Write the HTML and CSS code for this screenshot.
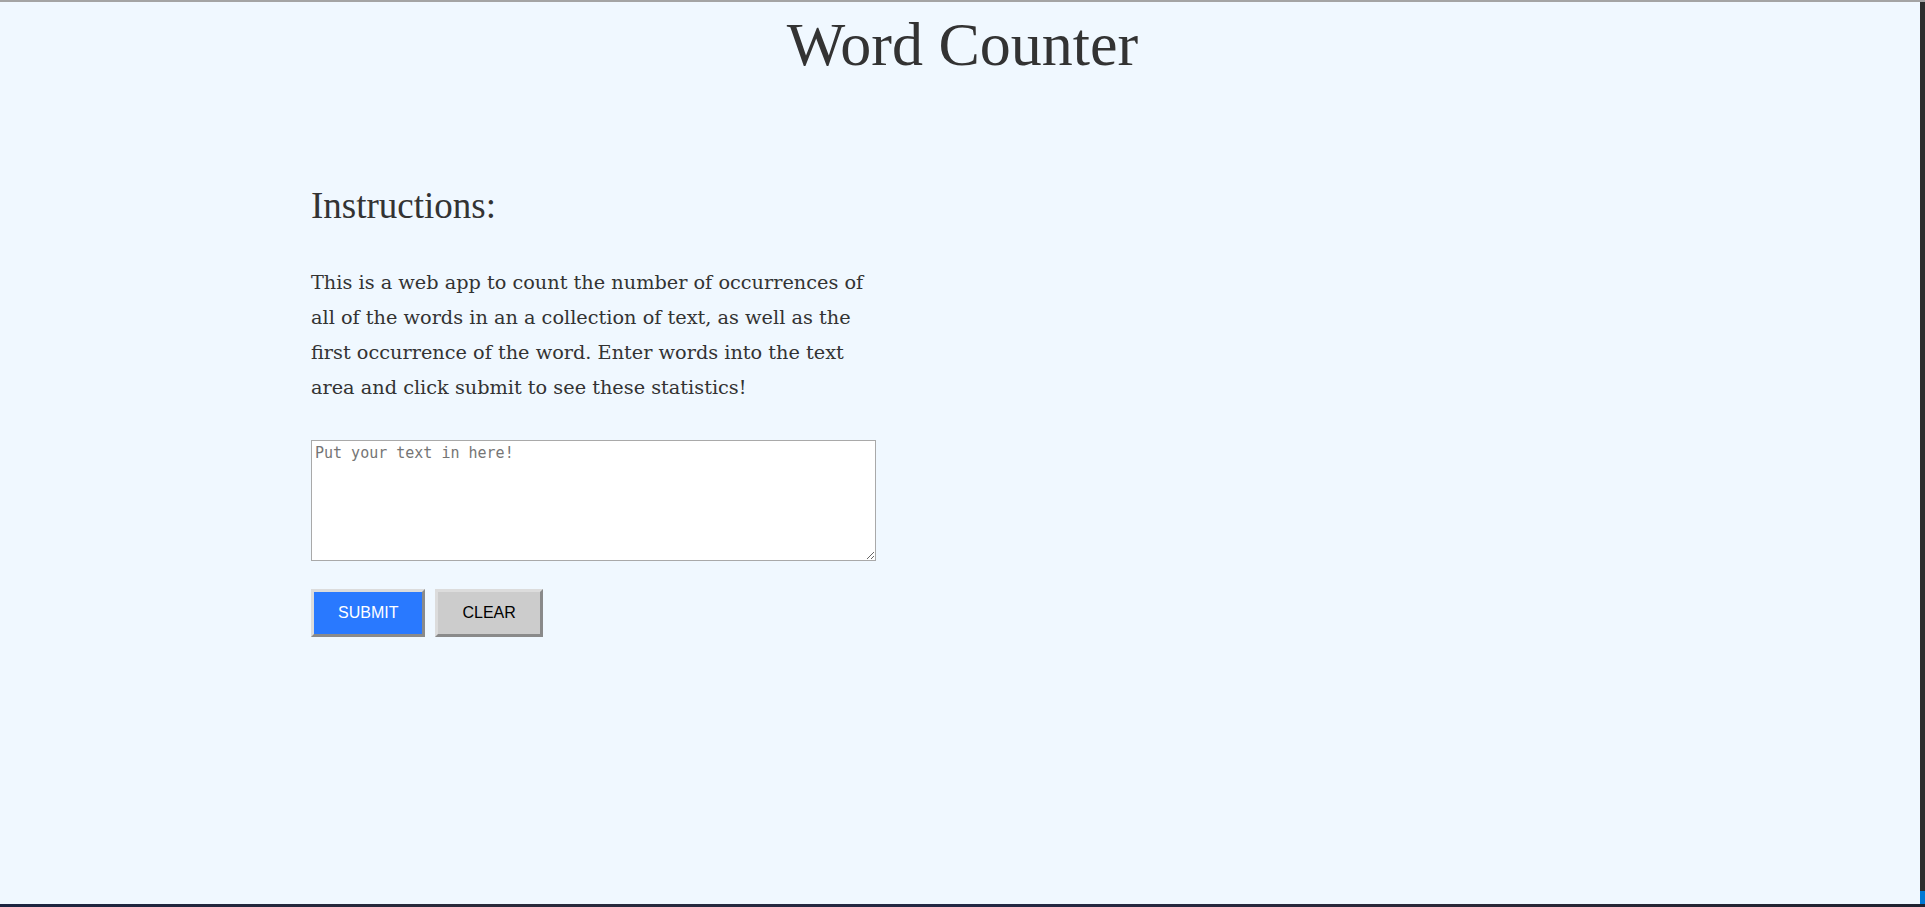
FILE: index.html
```html
<!DOCTYPE html>
<html lang="en">
<head>
<meta charset="utf-8">
<title>Word Counter</title>
<link rel="stylesheet" href="styles.css">
</head>
<body>
<div class="edge-right"><span class="edge-blue"></span></div>
<div class="edge-bottom"></div>
<header class="header">
  <h1 class="title">Word Counter</h1>
</header>
<main class="container">
  <h2 class="section-title">Instructions:</h2>
  <p class="intro">This is a web app to count the number of occurrences of all of the words in an a collection of text, as well as the first occurrence of the word. Enter words into the text area and click submit to see these statistics!</p>
  <textarea class="input" placeholder="Put your text in here!"></textarea>
  <div class="actions">
    <button class="btn btn-submit" type="button">SUBMIT</button>
    <button class="btn btn-clear" type="button">CLEAR</button>
  </div>
</main>
</body>
</html>
```

FILE: styles.css
```css
html, body {
  margin: 0;
  padding: 0;
}
body {
  background: #f0f8ff;
  color: #333;
  font-family: "Liberation Serif", "Times New Roman", serif;
  border-top: 2px solid #a4a4a4;
  min-height: 905px;
  box-sizing: border-box;
}
.edge-right {
  position: fixed;
  top: 2px;
  right: 0;
  bottom: 3px;
  width: 5px;
  background: #2e2e2e;
  display: flex;
  flex-direction: column;
  justify-content: flex-end;
}
.edge-blue {
  display: block;
  height: 13px;
  background: #0078d4;
}
.edge-bottom {
  position: fixed;
  left: 0;
  right: 0;
  bottom: 0;
  height: 3px;
  background: linear-gradient(90deg, #1c2440 0%, #2a2a3a 25%, #232844 50%, #2b2838 75%, #1f2230 100%);
}
.header {
  text-align: center;
}
.title {
  margin: 7px 0 0;
  font-size: 62px;
  line-height: 70px;
  font-weight: normal;
  color: #333;
}
.container {
  width: 1303px;
  margin: 0 auto;
}
.section-title {
  margin: 105px 0 0;
  font-size: 37px;
  line-height: 44px;
  font-weight: normal;
  color: #333;
}
.intro {
  margin: 37px 0 0;
  width: 565px;
  font-family: "DejaVu Serif", Georgia, serif;
  font-size: 19.3px;
  line-height: 35px;
  color: #333;
}
.input {
  display: block;
  box-sizing: border-box;
  margin: 35px 0 0;
  width: 565px;
  height: 121px;
  padding: 3px;
  border: 1px solid #a9a9a9;
  background: #fff;
  font-family: "DejaVu Sans Mono", "Liberation Mono", monospace;
  font-size: 15px;
  color: #000;
}
.input::placeholder {
  color: #757575;
}
.actions {
  display: flex;
  gap: 10px;
  margin-top: 28px;
}
.btn {
  box-sizing: border-box;
  height: 48px;
  padding: 0 24px;
  font-family: "Liberation Sans", Arial, sans-serif;
  font-size: 16px;
  border-width: 3px;
  border-style: solid;
  border-color: #dcdcdc #8a8a8a #8a8a8a #dcdcdc;
  cursor: pointer;
}
.btn-submit {
  background: #2979ff;
  color: #fff;
}
.btn-clear {
  background: #cccccc;
  color: #000;
}
```
